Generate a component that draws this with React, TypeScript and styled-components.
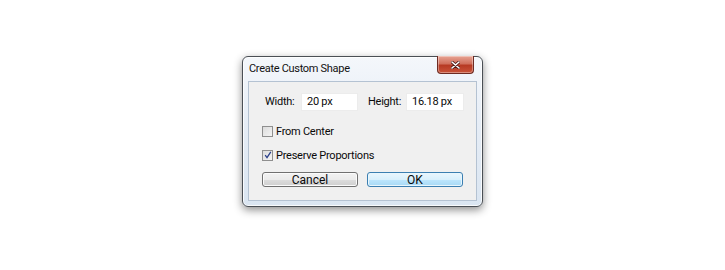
import React from 'react'
import styled, { createGlobalStyle } from 'styled-components'

const GlobalStyle = createGlobalStyle`
  html, body {
    margin: 0;
    padding: 0;
    background: #ffffff;
  }
  body {
    font-family: Roboto, "Liberation Sans", sans-serif;
    font-size: 11px;
    letter-spacing: -0.25px;
    color: #0a0a0a;
  }
`

const Stage = styled.div`
  width: 725px;
  height: 270px;
  padding: 56px 0 0 242px;
  box-sizing: border-box;
`

const Window = styled.div`
  width: 241px;
  height: 151px;
  box-sizing: border-box;
  border: 1px solid #4a4f55;
  border-radius: 6px;
  background: linear-gradient(180deg, #f4f7fb 0%, #e6edf6 45%, #dae5f1 100%);
  box-shadow: 0 3px 9px rgba(0, 0, 0, 0.45), inset 0 0 0 1px rgba(255, 255, 255, 0.8);
  display: flex;
  flex-direction: column;
  padding: 0 5px 5px 5px;
`

const TitleBar = styled.div`
  height: 24px;
  display: flex;
  align-items: flex-start;
  justify-content: space-between;
`

const Title = styled.span`
  padding: 5px 0 0 1px;
  font-size: 11px;
  letter-spacing: -0.3px;
  color: #111;
`

const CloseButton = styled.div`
  width: 37px;
  height: 18px;
  margin-top: -1px;
  margin-right: 3px;
  box-sizing: border-box;
  border: 1px solid #6d2a22;
  border-top: none;
  border-radius: 0 0 4px 4px;
  background: linear-gradient(180deg, #e8a494 0%, #d0705c 45%, #b73a23 55%, #c9543a 100%);
  display: flex;
  align-items: center;
  justify-content: center;
  box-shadow: inset 0 0 0 1px rgba(255, 255, 255, 0.35);
`

const Client = styled.div`
  flex: 1;
  background: #f0f0f0;
  border: 1px solid #b4c2d2;
  padding: 10px 0 0 13px;
  display: flex;
  flex-direction: column;
`

const SizeRow = styled.div`
  display: flex;
  align-items: center;
  padding-left: 3px;
  height: 19px;
`

const Label = styled.span<{ $w: number }>`
  flex-shrink: 0;
  width: ${(p) => p.$w}px;
`

const Field = styled.div<{ $w: number }>`
  flex-shrink: 0;
  width: ${(p) => p.$w}px;
  height: 18px;
  box-sizing: border-box;
  background: #ffffff;
  border: 1px solid #ececec;
  padding-left: 5px;
  display: flex;
  align-items: center;
  margin-right: 10px;
`

const CheckRow = styled.label<{ $top: number }>`
  display: flex;
  align-items: center;
  margin-top: ${(p) => p.$top}px;
  height: 12px;
`

const Box = styled.span`
  width: 11px;
  height: 11px;
  box-sizing: border-box;
  border: 1px solid #8f8f8f;
  background: linear-gradient(135deg, #dcdcdc 0%, #f4f4f4 100%);
  margin-right: 3px;
  display: flex;
  align-items: center;
  justify-content: center;
`

const ButtonRow = styled.div`
  display: flex;
  gap: 9px;
  margin-top: 11px;
`

const Button = styled.div<{ $primary?: boolean }>`
  width: 96px;
  height: 15px;
  box-sizing: border-box;
  border: 1px solid ${(p) => (p.$primary ? '#3c7fb1' : '#707070')};
  border-radius: 3px;
  background: ${(p) =>
    p.$primary
      ? 'linear-gradient(180deg, #eaf6fd 0%, #d9f0fc 50%, #bee6fd 51%, #a7d9f5 100%)'
      : 'linear-gradient(180deg, #f2f2f2 0%, #ebebeb 50%, #dddddd 51%, #cfcfcf 100%)'};
  box-shadow: inset 0 0 0 1px ${(p) => (p.$primary ? '#e8f6fd' : '#fbfbfb')};
  display: flex;
  align-items: center;
  justify-content: center;
  line-height: 1;
  font-size: 12px;
  letter-spacing: 0;
`

export default function App() {
  return (
    <Stage>
      <GlobalStyle />
      <Window>
        <TitleBar>
          <Title>Create Custom Shape</Title>
          <CloseButton>
            <svg width="9" height="8" viewBox="0 0 9 8">
              <path d="M1 1 L8 7 M8 1 L1 7" stroke="#4b1a14" strokeWidth="3" strokeLinecap="round" />
              <path d="M1 1 L8 7 M8 1 L1 7" stroke="#ffffff" strokeWidth="1.6" strokeLinecap="round" />
            </svg>
          </CloseButton>
        </TitleBar>
        <Client>
          <SizeRow>
            <Label $w={36}>Width:</Label>
            <Field $w={57}>20 px</Field>
            <Label $w={38}>Height:</Label>
            <Field $w={58}>16.18 px</Field>
          </SizeRow>
          <CheckRow $top={14}>
            <Box />
            From Center
          </CheckRow>
          <CheckRow $top={12}>
            <Box>
              <svg width="8" height="8" viewBox="0 0 8 8">
                <path d="M1.2 4.2 L3 6.6 L6.8 0.8" stroke="#2a3f8a" strokeWidth="1.3" fill="none" />
              </svg>
            </Box>
            Preserve Proportions
          </CheckRow>
          <ButtonRow>
            <Button>Cancel</Button>
            <Button $primary>OK</Button>
          </ButtonRow>
        </Client>
      </Window>
    </Stage>
  )
}
